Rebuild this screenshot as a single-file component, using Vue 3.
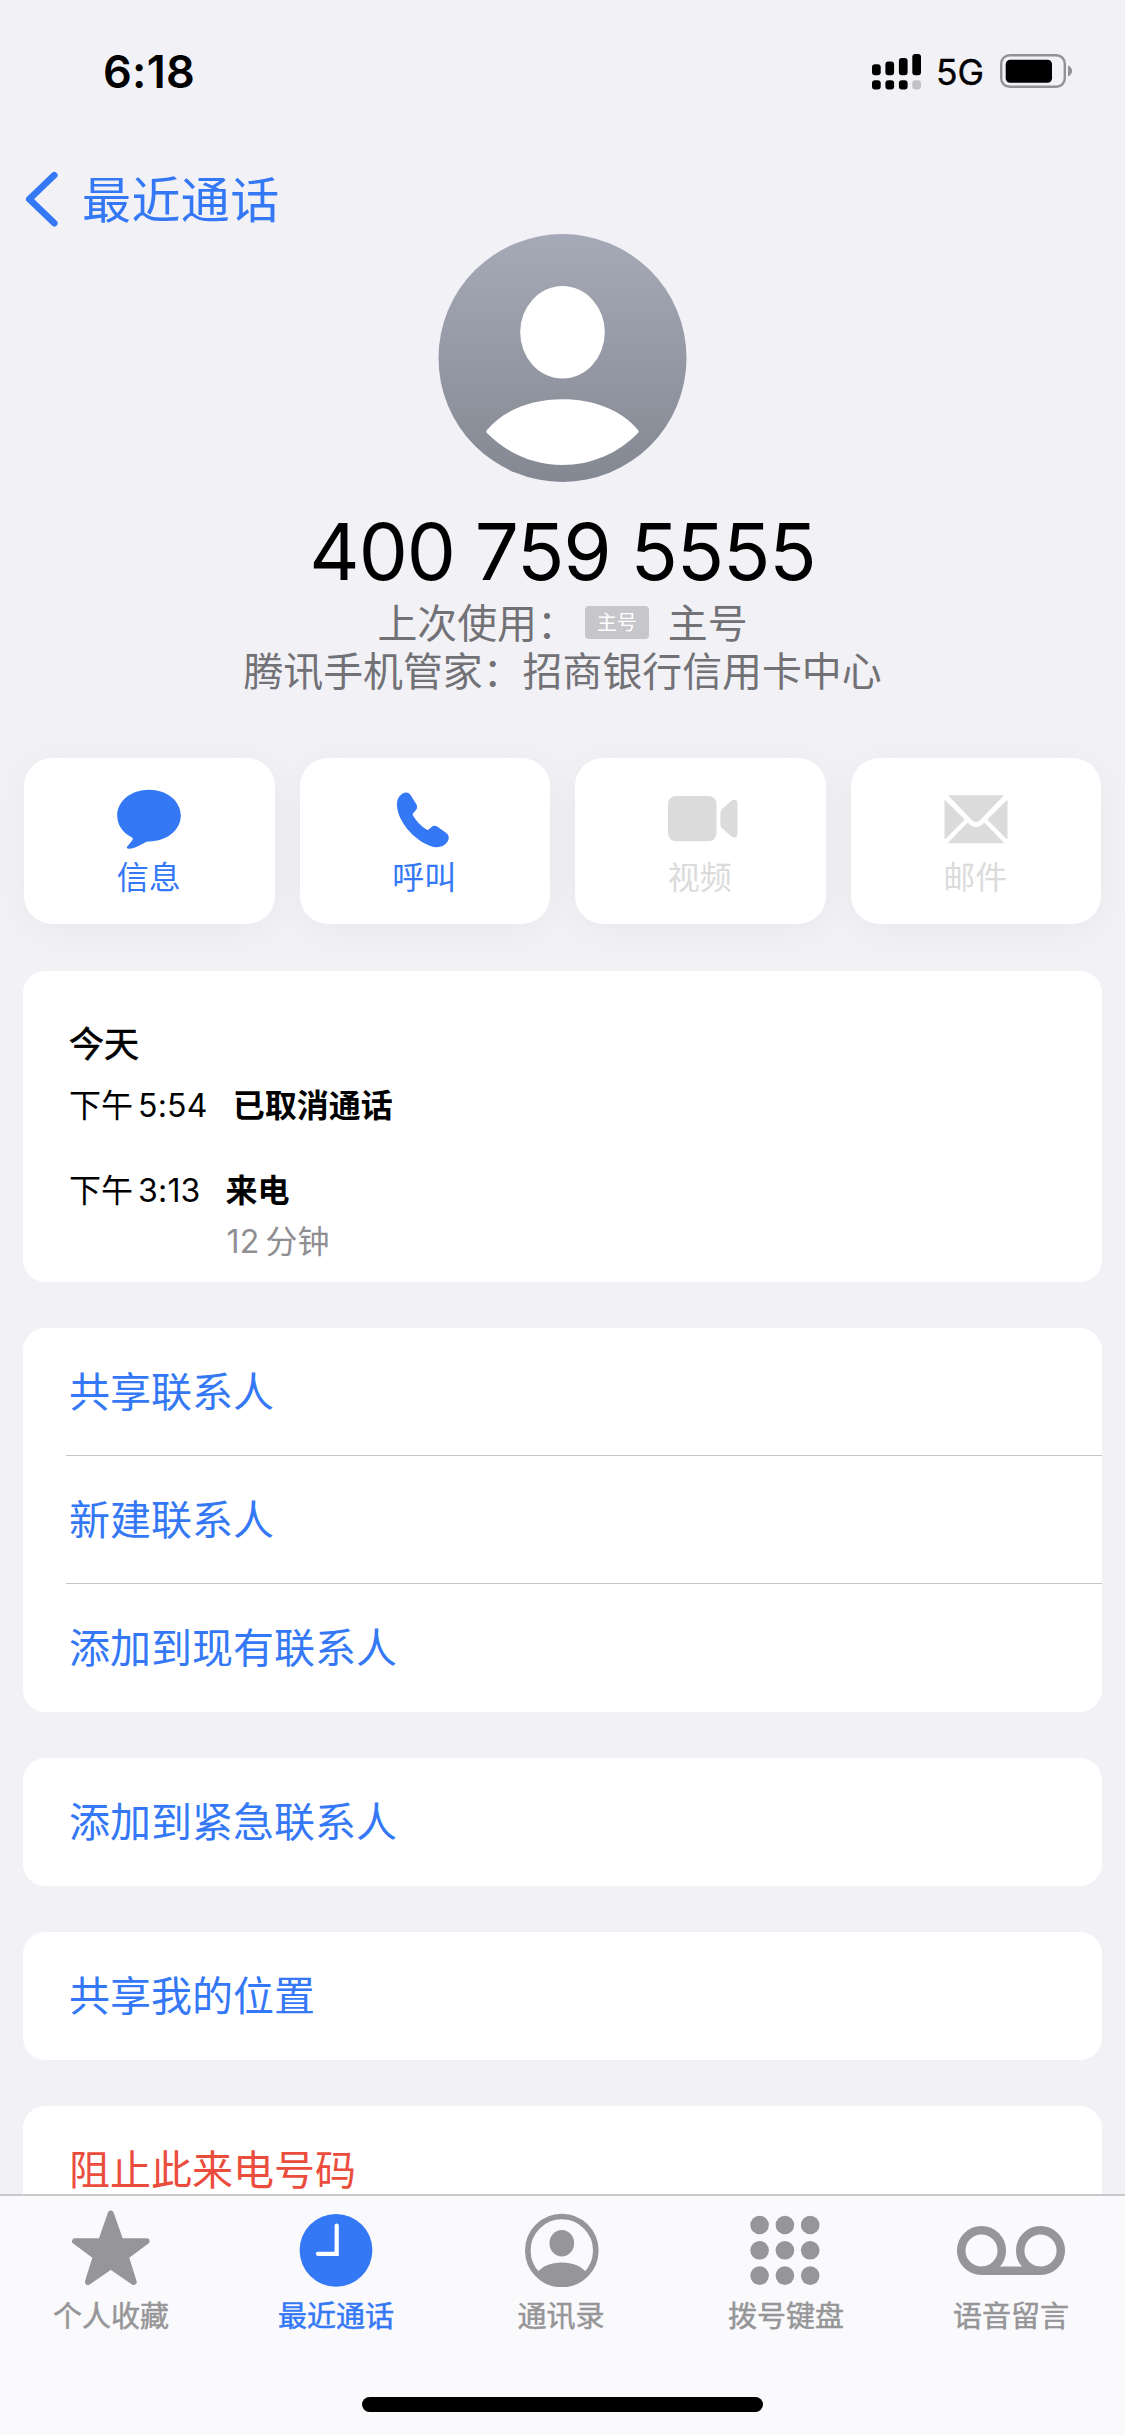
<script setup>
const signal = [
  { x: 0, top: 10.3, h: 11 },
  { x: 13.4, top: 7.4, h: 13.9 },
  { x: 26.9, top: 4, h: 17.3 },
  { x: 40.3, top: 0, h: 21.3 }
]
const actions = [
  { id: 'message', label: '信息', enabled: true },
  { id: 'call', label: '呼叫', enabled: true },
  { id: 'video', label: '视频', enabled: false },
  { id: 'mail', label: '邮件', enabled: false }
]
const groups = [
  { rows: ['共享联系人', '新建联系人', '添加到现有联系人'] },
  { rows: ['添加到紧急联系人'] },
  { rows: ['共享我的位置'] },
  { rows: ['阻止此来电号码'], danger: true }
]
const tabs = [
  { id: 'favorites', label: '个人收藏' },
  { id: 'recents', label: '最近通话', active: true },
  { id: 'contacts', label: '通讯录' },
  { id: 'keypad', label: '拨号键盘' },
  { id: 'voicemail', label: '语音留言' }
]
const keys = [0, 1, 2, 3, 4, 5, 6, 7, 8]
</script>

<template>
  <div class="phone">
    <header class="status">
      <span class="time">6:18</span>
      <div class="indicators">
        <svg class="signal" width="49" height="36" viewBox="0 0 49 36">
          <template v-for="(bar, i) in signal" :key="i">
            <rect :x="bar.x" :y="bar.top" width="8.7" :height="bar.h" rx="3" />
            <rect :x="bar.x" y="26.2" width="8.7" height="9.4" rx="3" :class="{ dim: i === 3 }" />
          </template>
        </svg>
        <span class="network">5G</span>
        <svg class="battery" width="73" height="34" viewBox="0 0 73 34">
          <rect x="1.2" y="1.2" width="63.6" height="31.6" rx="8.5" fill="none" stroke="#929296" stroke-width="2.4" />
          <rect x="5.7" y="5.7" width="46.3" height="23" rx="4.5" />
          <path d="M68 11.500c5.500 2.400 5.500 8.600 0 11z" fill="#929296" />
        </svg>
      </div>
    </header>

    <nav class="back">
      <svg width="36" height="56" viewBox="0 0 36 56">
        <path d="M31.300 4.200 6.300 28.200l25 24" fill="none" stroke="#3478f6" stroke-width="6.600" stroke-linecap="round" stroke-linejoin="round" />
      </svg>
      <span class="back-label">最近通话</span>
    </nav>

    <main class="content">
      <section class="profile">
        <svg class="avatar" width="249" height="249" viewBox="0 0 249 249">
          <defs>
            <linearGradient id="avatar-fill" x1="0" y1="0" x2="0" y2="1">
              <stop offset="0" stop-color="#a6aab8" />
              <stop offset="1" stop-color="#848892" />
            </linearGradient>
          </defs>
          <circle cx="124.500" cy="125" r="124" fill="url(#avatar-fill)" />
          <ellipse cx="124.500" cy="99.300" rx="42.300" ry="46.200" fill="#fff" />
          <path d="M49 197C66 176.500 94 166.200 124.500 166.200S183 176.500 200 197Q201.500 198.500 200 200C180 220.500 153 232 124.500 232S69 220.500 49 200Q47.500 198.500 49 197Z" fill="#fff" />
        </svg>
        <h1 class="number">400 759 5555</h1>
        <p class="line last-used">
          <span>上次使用：</span><span class="badge">主号</span><span>主号</span>
        </p>
        <p class="line">腾讯手机管家：招商银行信用卡中心</p>
      </section>

      <section class="actions">
        <button v-for="a in actions" :key="a.id" class="action" :class="{ off: !a.enabled }">
          <svg v-if="a.id === 'message'" width="66" height="62" viewBox="0 0 66 62">
            <path d="M33 1.500C15 1.500 1.200 13.700 1.200 29c0 10 5.600 18.600 14.800 23.300 1 .6 1 1.600.4 2.700-1.300 2.400-3 4.300-4.800 6.300-1.500 1.700-.8 3.200 1.600 3C19 63.800 25 60 29.500 57.300c1-.6 2-.8 3.500-.8 18 0 31.800-12.200 31.800-27.500S51 1.500 33 1.500Z" transform="matrix(1 0 0 .94 0 .3)" />
          </svg>
          <svg v-else-if="a.id === 'call'" width="66" height="62" viewBox="0 0 66 62">
            <path d="M10.800 5.500C13 4 16.300 4 18.400 6.800l5.800 9.300c1.500 2.500 1.200 4.400-.6 6.400l-2.300 2.500c-.8.900-.8 1.500-.3 2.500 3.500 6 8 10.500 13.500 14 1 .6 1.600.5 2.500-.3l2.300-2c2.200-1.800 3.900-1.900 6.200-.4l8.800 6.300c3.200 2.400 3 6.200 1 8.900-3.800 5.200-10 6.500-17 3.900C21 51.500 6 33 5 18c-.4-5.600 1.400-9.900 5.800-12.500Z" />
          </svg>
          <svg v-else-if="a.id === 'video'" class="video-icon" width="70" height="62" viewBox="0 0 70 62">
            <rect x="0" y="8" width="48.500" height="45.300" rx="8" />
            <path d="M52.400 25c0-1.800.6-3 1.800-4.200L63.500 12.700c2.800-1.900 6-.8 6 2.300v31.300c0 3.100-3.200 4.200-6 2.300l-9.300-8.100c-1.200-1.200-1.800-2.400-1.800-4.200Z" />
          </svg>
          <svg v-else width="64" height="62" viewBox="0 0 64 62">
            <path d="M5 7.200h54q.8 0 0 1.100L36.700 31.500c-3 3.400-6.400 3.400-9.400 0L5 8.300q-.8-1.100 0-1.100Z" />
            <path d="M.5 13q0-1.500 1.200-.3L20.800 31.600 1.700 50.700Q.5 51.800.5 50.300Z" />
            <path d="M63.500 13q0-1.500-1.200-.3L43.200 31.600l19.100 19.100q1.200 1.100 1.200-.4Z" />
            <path d="M4.800 54 23.800 34.500l1.200 1.200c4.500 4.500 9.500 4.500 14 0l1.200-1.200 19 19.500q.8 1.200-.7 1.200h-53q-1.500 0-.7-1.200Z" />
          </svg>
          <span>{{ a.label }}</span>
        </button>
      </section>

      <section class="card log">
        <h2>今天</h2>
        <div class="entry">
          <div class="when"><span>下午</span><span class="clock">5:54</span></div>
          <strong>已取消通话</strong>
        </div>
        <div class="entry">
          <div class="when"><span>下午</span><span class="clock">3:13</span></div>
          <div class="incoming">
            <strong>来电</strong>
            <div class="duration"><span class="clock">12</span><span>分钟</span></div>
          </div>
        </div>
      </section>

      <section v-for="(g, i) in groups" :key="i" class="card list" :class="{ danger: g.danger }">
        <div v-for="row in g.rows" :key="row" class="row">{{ row }}</div>
      </section>
    </main>

    <footer class="tabbar">
      <div class="tabs">
        <div v-for="t in tabs" :key="t.id" class="tab" :class="{ active: t.active }">
          <svg v-if="t.id === 'favorites'" width="110" height="80" viewBox="0 0 110 80">
            <path d="M54.800 6.500 64.500 34.200H90.600L69.800 49.700 77.700 75 54.800 59.300 31.900 75 39.800 49.700 19 34.200H45.100Z" stroke="currentColor" stroke-width="6" stroke-linejoin="round" />
          </svg>
          <svg v-else-if="t.id === 'recents'" width="110" height="80" viewBox="0 0 110 80">
            <circle cx="55" cy="43.300" r="36.400" />
            <path d="M55.700 18.500v28.300H36.900" fill="none" stroke="#fff" stroke-width="4.200" stroke-linecap="round" />
          </svg>
          <svg v-else-if="t.id === 'contacts'" width="110" height="80" viewBox="0 0 110 80">
            <circle cx="55.800" cy="43.500" r="34" fill="none" stroke="currentColor" stroke-width="5.600" />
            <ellipse cx="55.800" cy="36.200" rx="12.300" ry="13.300" />
            <path d="M31.800 65C36.800 59 44.800 55.600 55.800 55.600S74.800 59 79.800 65C73.800 73 65.800 78 55.800 78S37.800 73 31.800 65Z" />
          </svg>
          <svg v-else-if="t.id === 'keypad'" width="110" height="80" viewBox="0 0 110 80">
            <circle v-for="k in keys" :key="k" :cx="28.600 + (k % 3) * 25.300" :cy="18 + Math.floor(k / 3) * 25.300" r="9.300" />
          </svg>
          <svg v-else width="110" height="80" viewBox="0 0 110 80">
            <g fill="none" stroke="currentColor" stroke-width="8.500">
              <circle cx="25.500" cy="43.500" r="20.300" />
              <circle cx="84.500" cy="43.500" r="20.300" />
              <path d="M25.500 63.800h59" />
            </g>
          </svg>
          <span>{{ t.label }}</span>
        </div>
      </div>
      <div class="home"></div>
    </footer>
  </div>
</template>

<style>
body {
  background: #f1f1f6;
}
</style>

<style scoped>
.phone {
  width: 1125px;
  height: 2435px;
  display: flex;
  flex-direction: column;
  overflow: hidden;
  background: #f1f1f6;
  color: #000;
  font-family: "Noto Sans CJK SC", sans-serif;
}
h1, h2, p {
  margin: 0;
  font-weight: 400;
}
svg {
  display: block;
  flex: none;
  fill: currentColor;
}
.status {
  height: 143px;
  flex: none;
  box-sizing: border-box;
  padding: 0 52px 0 103px;
  display: flex;
  justify-content: space-between;
}
.time {
  margin-top: 44px;
  font: 600 45px/56px Inter, sans-serif;
  letter-spacing: 0.3px;
}
.indicators {
  display: flex;
  margin-top: 54px;
  height: 36px;
  align-items: flex-start;
}
.dim {
  fill: #c3c3c7;
}
.network {
  width: 79px;
  box-sizing: border-box;
  padding-left: 15px;
  font: 400 35.500px/38px Inter, sans-serif;
  -webkit-text-stroke: 0.4px currentColor;
}
.back {
  height: 90px;
  flex: none;
  display: flex;
  padding-left: 23px;
  color: #3478f6;
}
.back svg {
  margin-top: 28px;
}
.back-label {
  margin: 18px 0 0 23px;
  font-size: 49px;
  letter-spacing: 0.4px;
  line-height: 72px;
}
.content {
  flex: 1;
  min-height: 0;
  overflow: hidden;
}
.profile {
  display: flex;
  flex-direction: column;
  align-items: center;
  height: 525px;
}
.number {
  height: 115px;
  box-sizing: border-box;
  padding-top: 24px;
  font: 400 78px/91px Inter, sans-serif;
  letter-spacing: -1.100px;
  word-spacing: -1px;
  white-space: pre;
}
.line {
  height: 48px;
  line-height: 47px;
  font-size: 39.900px;
  color: #727276;
  white-space: nowrap;
}
.last-used {
  display: flex;
}
.badge {
  width: 64px;
  height: 33px;
  margin: 9px 19px 0 8px;
  border-radius: 4px;
  background: #c6c6cb;
  color: #fff;
  font-size: 20px;
  line-height: 31px;
  text-align: center;
}
.actions {
  display: grid;
  grid-template-columns: repeat(4, 1fr);
  gap: 25px;
  padding: 0 24px;
}
.action {
  height: 166px;
  border: 0;
  padding: 30px 0 0;
  border-radius: 28px;
  background: #fff;
  color: #3478f6;
  font: 400 32px/46px "Noto Sans CJK SC", sans-serif;
  display: flex;
  flex-direction: column;
  align-items: center;
  box-shadow: 0 6px 40px rgba(0, 0, 0, 0.045);
}
.action span {
  margin: 2px 1px 0 0;
}
.video-icon {
  margin-left: 5px;
}
.action.off {
  color: #dbdbdb;
}
.card {
  margin: 0 23px 46px;
  border-radius: 22px;
  background: #fff;
}
.log {
  height: 311px;
  margin-top: 47px;
  box-sizing: border-box;
  padding: 45px 46px 0;
  font-size: 32px;
}
.log h2 {
  height: 64px;
  font-size: 35px;
  line-height: 52px;
  -webkit-text-stroke: 0.7px currentColor;
}
.entry {
  display: flex;
  height: 84.500px;
  line-height: 46px;
}
.when {
  display: flex;
}
.clock {
  margin-left: 5px;
  font: 400 32px/52px Inter, sans-serif;
  letter-spacing: 0.2px;
}
.entry strong {
  display: block;
  margin-left: 25px;
  font-weight: 600;
}
.duration {
  display: flex;
  margin: 5px 0 0 26px;
  color: #8e8e93;
}
.duration .clock {
  margin: 0 6px 0 0;
}
.list {
  color: #3478f6;
}
.danger {
  color: #eb4d3d;
}
.row {
  height: 128px;
  box-sizing: border-box;
  margin-left: 43px;
  padding-left: 3px;
  font-size: 41px;
  line-height: 123px;
}
.row:not(:last-child) {
  border-bottom: 1px solid #c6c6c8;
}
.tabbar {
  height: 241px;
  flex: none;
  box-sizing: border-box;
  border-top: 2px solid #c9c9cb;
  background: #fafafc;
  display: flex;
  flex-direction: column;
  align-items: center;
  color: #969698;
}
.tabs {
  width: 100%;
  height: 201px;
  box-sizing: border-box;
  display: grid;
  grid-template-columns: repeat(5, 225px);
  margin-left: -3px;
}
.tab {
  display: flex;
  flex-direction: column;
  align-items: center;
  padding-top: 11px;
  font-size: 29px;
  line-height: 42px;
}
.tab span {
  margin-top: 6px;
  -webkit-text-stroke: 0.5px currentColor;
}
.tab.active {
  color: #3478f6;
}
.home {
  width: 401px;
  height: 15px;
  border-radius: 8px;
  background: #000;
}
</style>
